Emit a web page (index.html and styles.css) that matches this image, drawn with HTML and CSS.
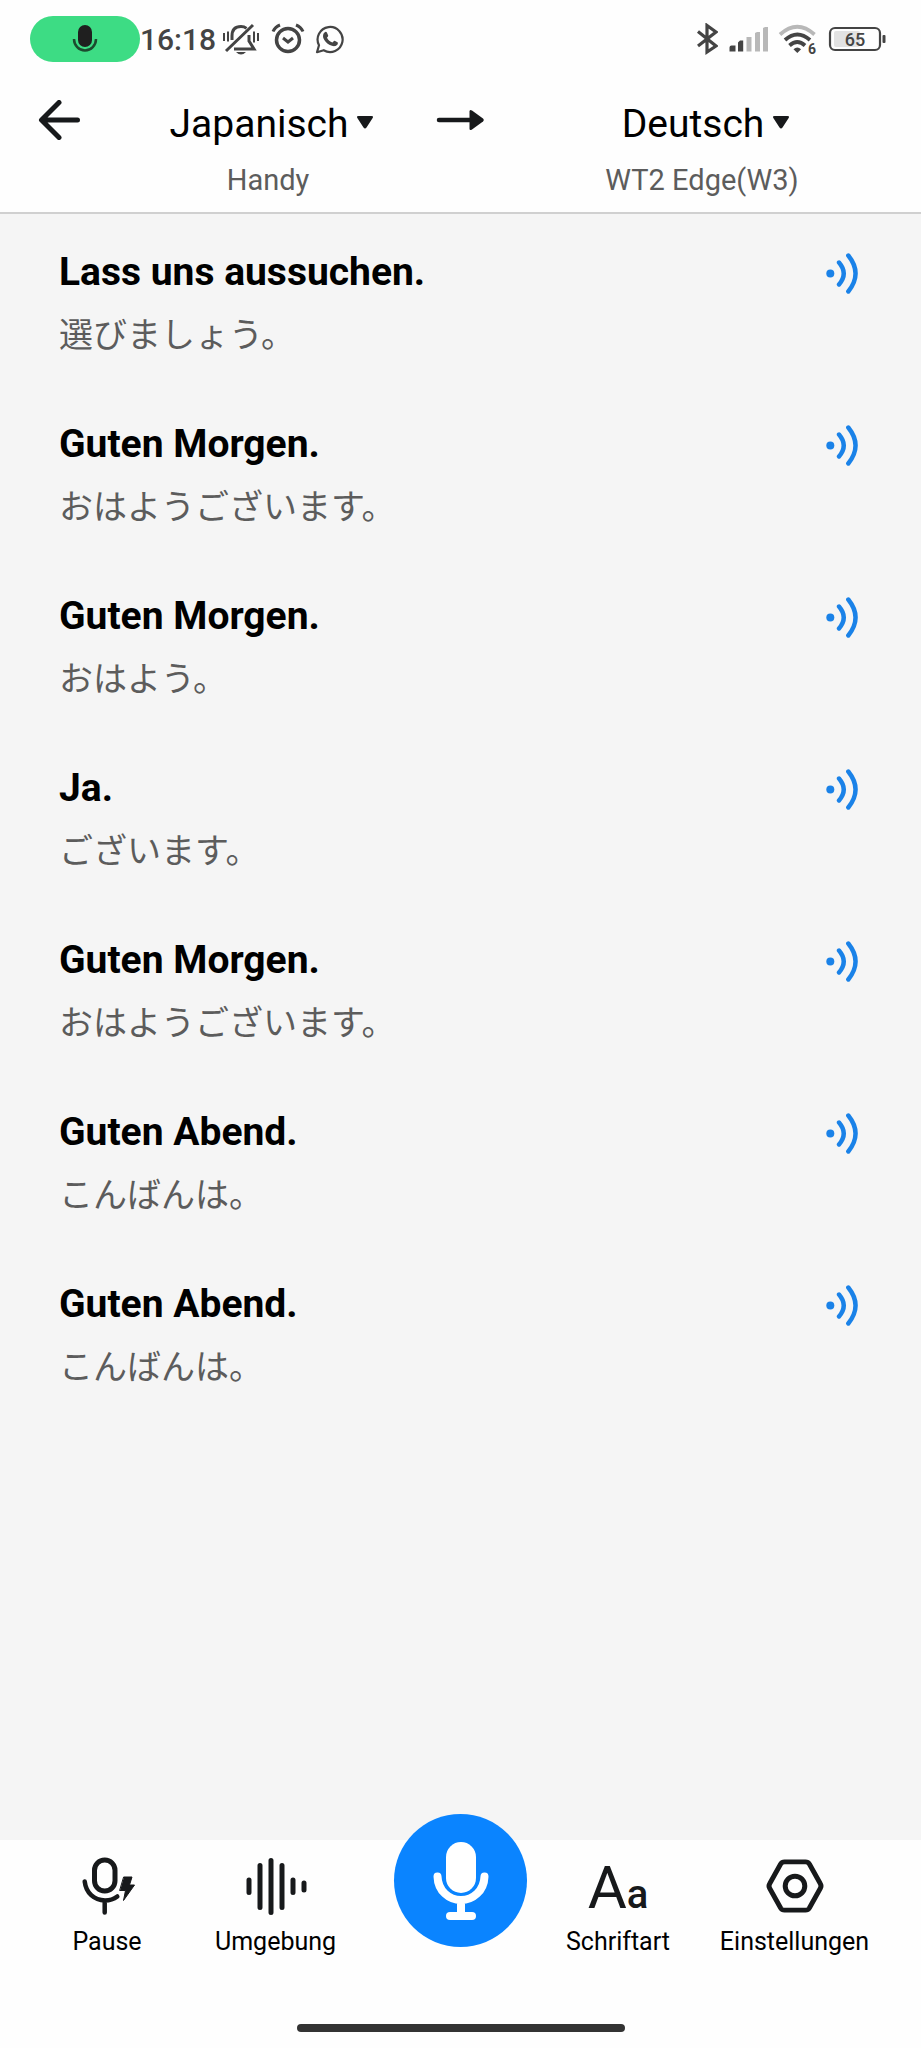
FILE: index.html
```html
<!DOCTYPE html>
<html lang="de">
<head>
    <meta charset="UTF-8">
    <meta name="viewport" content="width=device-width, initial-scale=1.0">
    <title>Japanisch - Deutsch</title>
    <link rel="stylesheet" href="styles.css">
</head>
<body>
    <div class="status-bar">
        <div class="status-left">
            <div class="mic-pill">
                <svg width="26" height="30" viewBox="0 0 26 30">
                    <rect x="6" y="1" width="14" height="22" rx="7" fill="#1f1f1f"/>
                    <path d="M2 15a11 11.5 0 0 0 22 0" fill="none" stroke="#1c4a2e" stroke-width="2.5"/>
                </svg>
            </div>
            <span class="time">16:18</span>
            <div class="status-icons">
                <svg width="40" height="32" viewBox="0 0 40 32" fill="none" stroke="#444" stroke-width="3">
                    <path d="M11 17V13C11 7 14 3.5 20 3.5c2 0 4 .6 5.500 1.800M28 12v6l5 8H13M5 28L32 2"/>
                    <path d="M15 29h10q-5 5-10 0z" fill="#444" stroke="none"/>
                    <path d="M3 10v8M7 8.500v10M33 8.500v11M37 10v8" stroke-width="2"/>
                </svg>
                <svg width="34" height="32" viewBox="0 0 34 32" fill="none" stroke="#444" stroke-width="3.500">
                    <circle cx="17" cy="17" r="11.500"/>
                    <path d="M2 8.500Q4 4 9 2M32 8.500Q30 4 25 2" stroke-width="3"/>
                    <path d="M12 15l5 4 5-4" stroke-width="3"/>
                </svg>
                <svg width="30" height="32" viewBox="0 0 30 32">
                    <path d="M2 29.200l2-7A12.500 12.500 0 1 1 8.700 27.200z" fill="none" stroke="#444" stroke-width="2.200" stroke-linejoin="round"/>
                    <path d="M9.500 9.500c1-1 2-.8 2.500.2l1.200 2.800c.2.600-.8 1.700-1.200 2.200 1.300 2.500 3 3.900 5.500 4.900.6-.5 1.400-2 2.100-1.800l2.900 1.400c.8.500.3 2-.5 2.900-1.800 1.800-4.500 1.300-7.200 0-3-1.500-5.500-4.300-6.500-7.100-.6-2.200-.3-4.200 1.200-5.500z" fill="#444"/>
                </svg>
            </div>
        </div>
        <div class="status-icons">
            <svg width="22" height="32" viewBox="0 0 22 32" fill="none" stroke="#444" stroke-width="3.200">
                <path d="M2 8.500L20 23l-9 6V2.500L20 9 2 23"/>
            </svg>
            <svg width="40" height="32" viewBox="0 0 40 32">
                <path d="M1.500 28.500v-4q0-2 2-2h4v6zM10 28.500v-9l2-2h3.200v11z" fill="#444"/>
                <path d="M18.500 28.500V14h5v14.500zM27 28.500V10l2-1h3v19.500zM35 28.500V5l2-1h3v24.500z" fill="#b8b8b8"/>
            </svg>
            <svg class="wifi" width="40" height="32" viewBox="0 0 40 32" fill="none" stroke="#444" stroke-width="3.800">
                <path d="M2 11.500Q19.300-4 36.500 11.500" stroke="#b8b8b8"/>
                <path d="M7 17Q19.300 6 32 17M11.500 22.500q7.800-7 15.500 0"/>
                <path d="M15.500 26.200q3.800-3.500 7.600 0L19.300 30z" fill="#444" stroke="none"/>
                <text x="30" y="31" class="wifi-text">6</text>
            </svg>
            <svg width="58" height="32" viewBox="0 0 58 32">
                <rect x="6" y="8" width="26" height="16" rx="2" fill="#e2e2e2"/>
                <rect x="2" y="5" width="50" height="22" rx="5" fill="none" stroke="#444" stroke-width="2.200"/>
                <rect x="54.500" y="12" width="3" height="8" rx="1" fill="#444"/>
                <text x="27" y="23" text-anchor="middle" class="battery-text">65</text>
            </svg>
        </div>
    </div>

    <header class="header">
        <button class="icon-button back" aria-label="Zurück">
            <svg width="44" height="40" viewBox="0 0 44 40" fill="none" stroke="#17191b" stroke-width="5" stroke-linecap="round" stroke-linejoin="round">
                <path d="M21 2.500L3.500 20 21 37.500M4 20h35.500"/>
            </svg>
        </button>
        <div class="language">
            <button class="language-name">
                Japanisch
                <svg width="18" height="18" viewBox="0 0 18 18"><path d="M2.500 1h13q2.500 0 1 2.200l-6 9.300q-1.500 2-3 0l-6-9.300Q0 1 2.500 1z" fill="#17191b"/></svg>
            </button>
            <div class="device">Handy</div>
        </div>
        <div class="direction">
            <svg width="48" height="40" viewBox="0 0 48 40">
                <path d="M3 20h34" stroke="#17191b" stroke-width="4.500" stroke-linecap="round"/>
                <path d="M33.500 11.500q0-2.500 2.500-1l11 8q1.500 1.500 0 3l-11 8q-2.500 1.500-2.500-1z" fill="#17191b"/>
            </svg>
        </div>
        <div class="language">
            <button class="language-name">
                Deutsch
                <svg width="18" height="18" viewBox="0 0 18 18"><path d="M2.500 1h13q2.500 0 1 2.200l-6 9.300q-1.500 2-3 0l-6-9.300Q0 1 2.500 1z" fill="#17191b"/></svg>
            </button>
            <div class="device">WT2 Edge(W3)</div>
        </div>
    </header>

    <svg class="symbols" width="0" height="0">
        <symbol id="sound" viewBox="0 0 40 48">
            <circle cx="8.300" cy="25.500" r="4" fill="#1a82e8"/>
            <path d="M17 14.500q9.500 11 0 22M26.300 7.500q14.500 18 0 36" fill="none" stroke="#1a82e8" stroke-width="4.400" stroke-linecap="round"/>
        </symbol>
    </svg>

    <main class="messages">
        <div class="message">
            <div>
                <div class="translation">Lass uns aussuchen.</div>
                <div class="source" lang="ja">選びましょう。</div>
            </div>
            <button class="icon-button" aria-label="Abspielen"><svg width="40" height="48"><use href="#sound"/></svg></button>
        </div>
        <div class="message">
            <div>
                <div class="translation">Guten Morgen.</div>
                <div class="source" lang="ja">おはようございます。</div>
            </div>
            <button class="icon-button" aria-label="Abspielen"><svg width="40" height="48"><use href="#sound"/></svg></button>
        </div>
        <div class="message">
            <div>
                <div class="translation">Guten Morgen.</div>
                <div class="source" lang="ja">おはよう。</div>
            </div>
            <button class="icon-button" aria-label="Abspielen"><svg width="40" height="48"><use href="#sound"/></svg></button>
        </div>
        <div class="message">
            <div>
                <div class="translation">Ja.</div>
                <div class="source" lang="ja">ございます。</div>
            </div>
            <button class="icon-button" aria-label="Abspielen"><svg width="40" height="48"><use href="#sound"/></svg></button>
        </div>
        <div class="message">
            <div>
                <div class="translation">Guten Morgen.</div>
                <div class="source" lang="ja">おはようございます。</div>
            </div>
            <button class="icon-button" aria-label="Abspielen"><svg width="40" height="48"><use href="#sound"/></svg></button>
        </div>
        <div class="message">
            <div>
                <div class="translation">Guten Abend.</div>
                <div class="source" lang="ja">こんばんは。</div>
            </div>
            <button class="icon-button" aria-label="Abspielen"><svg width="40" height="48"><use href="#sound"/></svg></button>
        </div>
        <div class="message">
            <div>
                <div class="translation">Guten Abend.</div>
                <div class="source" lang="ja">こんばんは。</div>
            </div>
            <button class="icon-button" aria-label="Abspielen"><svg width="40" height="48"><use href="#sound"/></svg></button>
        </div>
    </main>

    <footer class="footer">
        <nav class="toolbar">
            <button class="tool">
                <svg width="64" height="60" viewBox="0 0 64 60" fill="none" stroke="#17191b" stroke-width="4.500" stroke-linecap="round">
                    <rect x="19.500" y="4" width="20.500" height="31" rx="10.200" stroke-width="5"/>
                    <path d="M9.700 25.500C11 37 19 44 30 44.500c5 0 9-1.500 12.300-4M29.700 46v10.500"/>
                    <path d="M49 21h8l-2.500 8h5L48.500 44.500l2-10H45z" fill="#17191b" stroke-width="1" stroke-linejoin="round"/>
                </svg>
                Pause
            </button>
            <button class="tool">
                <svg width="64" height="60" viewBox="0 0 64 60" stroke="#17191b" stroke-width="5" stroke-linecap="round">
                    <path d="M5 24v12.500M16 9.500v42M27 4.500v52M38 9.500v42M49 24v12.500M60 27v7"/>
                </svg>
                Umgebung
            </button>
            <button class="record" aria-label="Aufnahme">
                <svg width="56" height="78" viewBox="0 0 56 78" fill="none" stroke="#fff" stroke-width="8" stroke-linecap="round">
                    <rect x="13" y="0" width="30" height="51" rx="15" fill="#fff" stroke="none"/>
                    <path d="M4.500 34.500C5 49 16 58 28 58s23-9 23.500-23.500M28 60v12"/>
                    <path d="M17 74h22"/>
                </svg>
            </button>
            <button class="tool">
                <span class="font-icon" aria-hidden="true"><span class="font-big">A</span><span class="font-small">a</span></span>
                Schriftart
            </button>
            <button class="tool">
                <svg width="64" height="60" viewBox="0 0 64 60" fill="none" stroke="#17191b" stroke-width="5" stroke-linejoin="round">
                    <path d="M21.500 4.500h21q2.500 0 3.800 2.200l11 20.800q1.400 2.500 0 5l-11 20.800q-1.300 2.200-3.800 2.200h-21q-2.500 0-3.800-2.200l-11-20.800q-1.400-2.500 0-5l11-20.800q1.300-2.200 3.800-2.200z" transform="translate(0 1.500) scale(1 .95)"/>
                    <circle cx="32" cy="30" r="9.800"/>
                </svg>
                Einstellungen
            </button>
        </nav>
        <div class="home-indicator"></div>
    </footer>
</body>
</html>
```

FILE: styles.css
```css
* {
    box-sizing: border-box;
}

body {
    margin: 0;
    min-height: 100vh;
    display: flex;
    flex-direction: column;
    background-color: #fefefe;
    color: #000;
    font-family: Roboto, "Noto Sans CJK JP", sans-serif;
}

button {
    padding: 0;
    border: none;
    background: none;
    color: inherit;
    font-family: inherit;
    cursor: pointer;
}

svg {
    display: block;
    flex-shrink: 0;
}

.symbols {
    position: absolute;
}

.status-bar {
    display: flex;
    justify-content: space-between;
    align-items: center;
    height: 78px;
    padding: 0 35px 0 30px;
    color: #444;
}

.status-left {
    display: flex;
    align-items: center;
}

.mic-pill {
    display: flex;
    justify-content: center;
    align-items: center;
    width: 110px;
    height: 46px;
    border-radius: 23px;
    background: #3ddc84;
}

.time {
    margin-right: 5px;
    font-size: 30px;
    font-weight: 500;
    line-height: 36px;
    padding-top: 2px;
}

.status-icons {
    display: flex;
    align-items: center;
    gap: 10px;
}

.wifi {
    overflow: visible;
}

.wifi-text {
    fill: #444;
    stroke: none;
    font-size: 14px;
    font-weight: 700;
}

.battery-text {
    fill: #444;
    font-size: 18px;
    font-weight: 500;
}

.header {
    display: grid;
    grid-template-columns: 118px 3fr 84px 4fr;
    padding: 22px 19px 14px 0;
    border-bottom: 2px solid #d0d0d0;
}

.icon-button {
    align-self: start;
}

.back {
    padding-left: 38px;
}

.language {
    display: flex;
    flex-direction: column;
    align-items: center;
    gap: 14px;
}

.language-name {
    display: flex;
    align-items: center;
    gap: 8px;
    padding-left: 8px;
    font-size: 39px;
    line-height: 48px;
}

.device {
    color: #5c5c5c;
    font-size: 29px;
    line-height: 36px;
}

.direction {
    display: flex;
    justify-content: center;
}

.messages {
    flex: 1;
    display: flex;
    flex-direction: column;
    gap: 63px;
    padding: 34px 59px;
    background: #f5f5f5;
}

.message {
    display: flex;
    justify-content: space-between;
}

.translation {
    margin-bottom: 13px;
    font-size: 39px;
    font-weight: 700;
    line-height: 48px;
}

.source {
    color: #5c5c5c;
    font-family: "Noto Sans CJK JP", sans-serif;
    font-size: 34px;
    line-height: 48px;
}

.footer {
    display: flex;
    flex-direction: column;
    align-items: center;
    justify-content: space-between;
    height: 208px;
    padding: 16px 0;
}

.toolbar {
    align-self: stretch;
    display: grid;
    grid-template-columns: 148fr 189fr 181fr 134fr 219fr;
    justify-items: center;
    align-items: start;
    padding: 0 17px 0 33px;
}

.tool {
    display: flex;
    flex-direction: column;
    align-items: center;
    gap: 11px;
    font-size: 25px;
    line-height: 30px;
}

.record {
    display: flex;
    justify-content: center;
    align-items: center;
    width: 133px;
    height: 133px;
    margin-top: -42px;
    border-radius: 50%;
    background: #0a84ff;
}

.font-icon {
    display: flex;
    align-items: baseline;
    height: 60px;
    color: #17191b;
    line-height: 64px;
}

.font-big {
    font-size: 60px;
}

.font-small {
    font-size: 40px;
    font-weight: 500;
}

.home-indicator {
    width: 328px;
    height: 8px;
    border-radius: 4px;
    background: #333;
}
```
